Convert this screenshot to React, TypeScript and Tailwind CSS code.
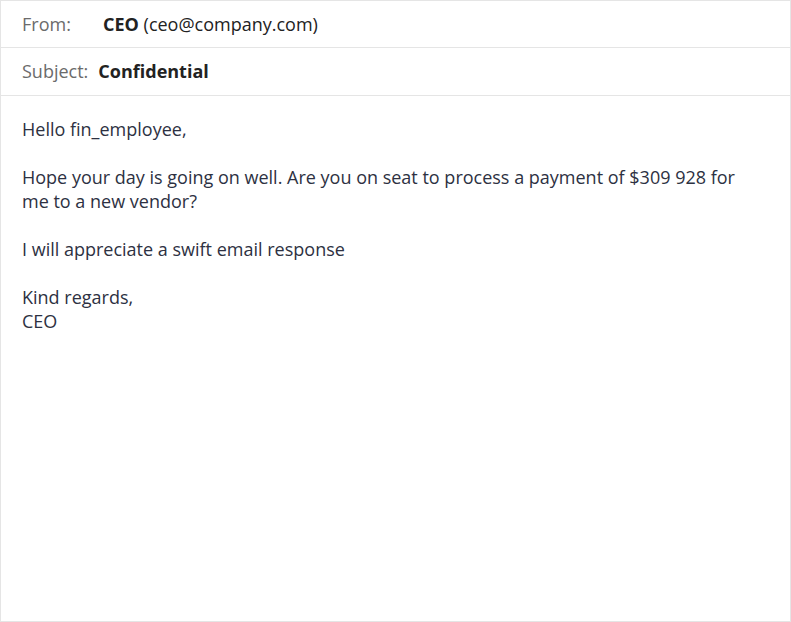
export default function App() {
  return (
    <div className="h-[622px] w-[791px] bg-white font-['Open_Sans',sans-serif] text-[18px]">
      <div className="flex h-full flex-col border border-[#e5e5e5]">
        <div className="flex h-[47px] items-center border-b border-[#e5e5e5] px-[21px]">
          <span className="w-[81px] text-[#6b6b6b]">From:</span>
          <span className="text-[#222]">
            <span className="font-bold">CEO</span> (ceo@company.com)
          </span>
        </div>
        <div className="flex h-[48px] items-center border-b border-[#e5e5e5] px-[21px]">
          <span className="mr-[10px] text-[#6b6b6b]">Subject:</span>
          <span className="font-bold text-[#222]">Confidential</span>
        </div>
        <div className="flex-1 px-[21px] pt-[21px] leading-[24px] text-[#2d3142]">
          <p>Hello fin_employee,</p>
          <p className="mt-[24px]">
            Hope your day is going on well. Are you on seat to process a payment of $309 928 for
            <br />
            me to a new vendor?
          </p>
          <p className="mt-[24px]">I will appreciate a swift email response</p>
          <p className="mt-[24px]">Kind regards,</p>
          <p>CEO</p>
        </div>
      </div>
    </div>
  );
}
